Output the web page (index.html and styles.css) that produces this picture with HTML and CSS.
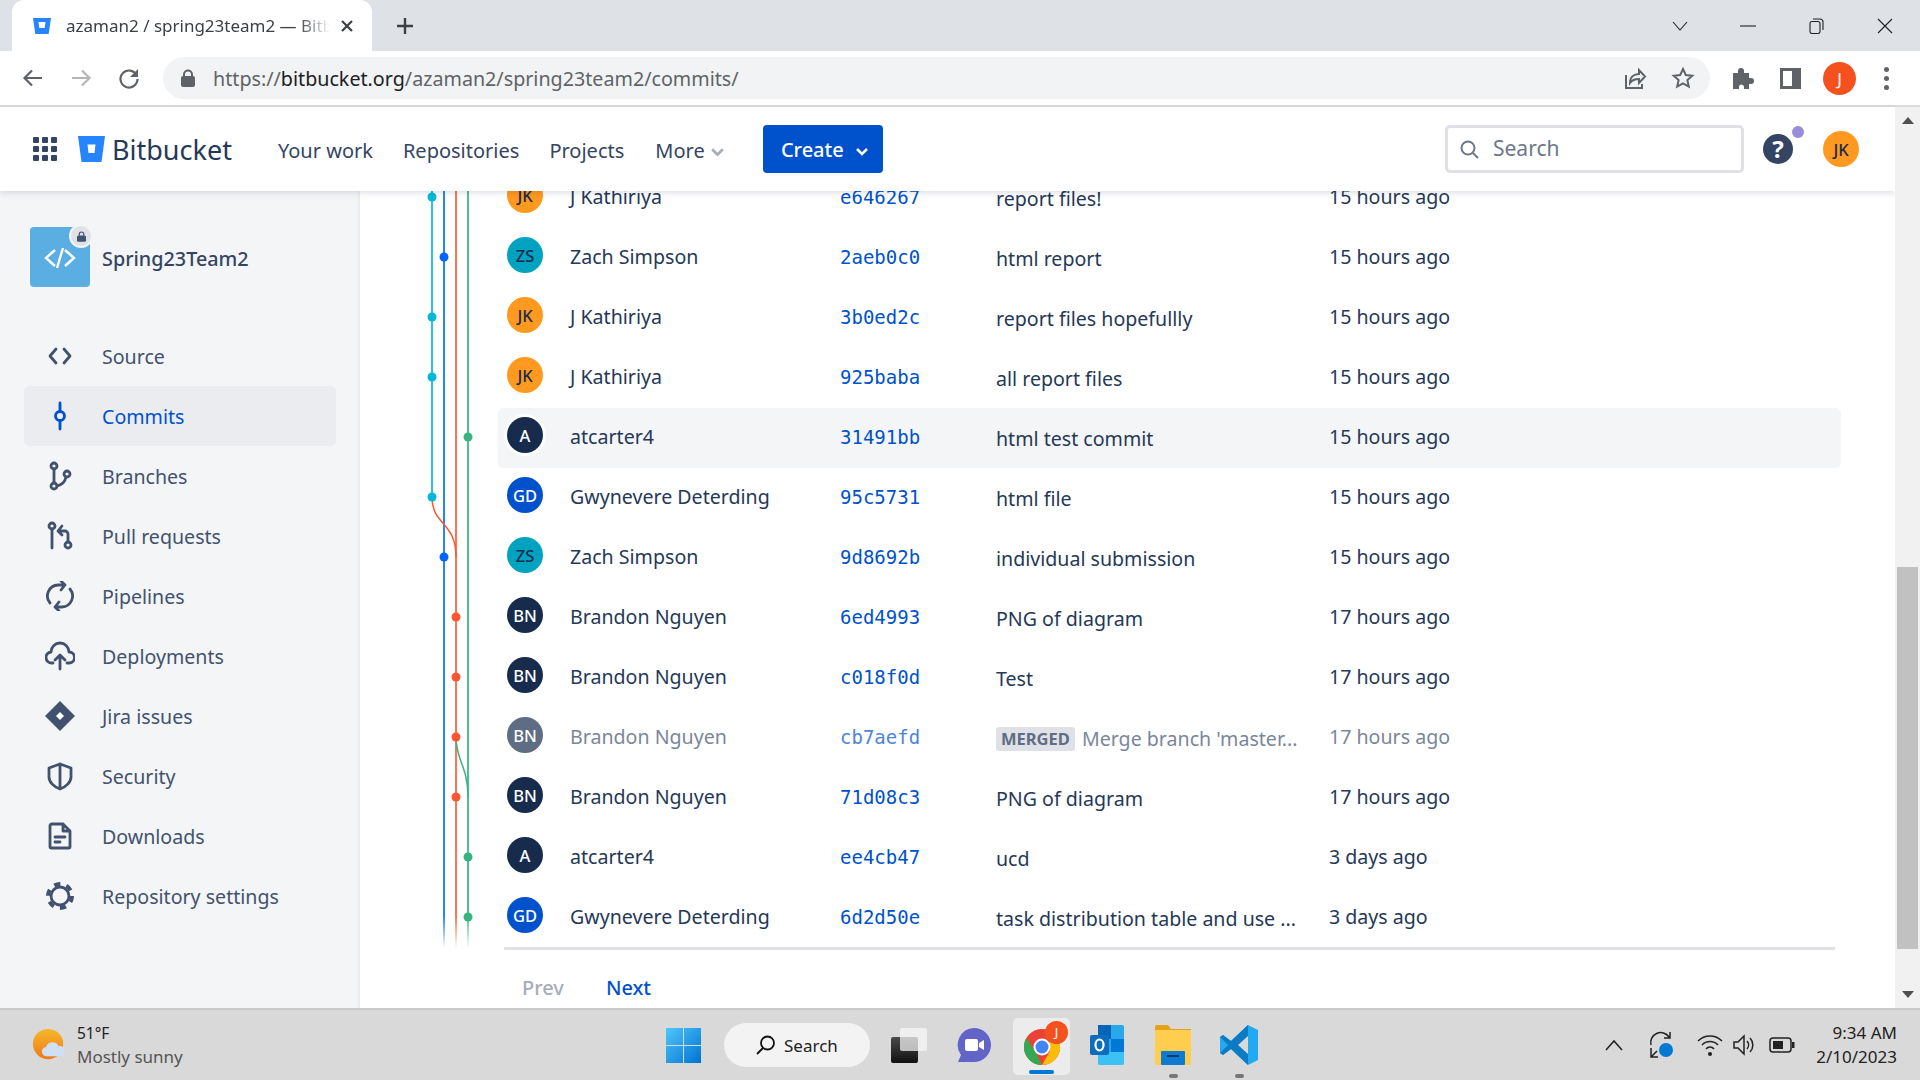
FILE: index.html
```html
<!DOCTYPE html>
<html lang="en">
<head>
    <meta charset="UTF-8">
    <title>azaman2 / spring23team2 — Bitbucket</title>
    <link rel="stylesheet" href="styles.css">
</head>
<body>
    <div class="tabstrip">
        <div class="tab">
            <svg class="favicon" viewBox="0 0 18 18"><path fill="#2684ff" d="M0 1h18l-2.300 16H2.300z"/><path fill="#fff" d="M5.500 5h7l-.8 6H6.300z"/></svg>
            <span class="tab-title">azaman2 / spring23team2 — Bitbucket</span>
            <svg class="tab-close" viewBox="0 0 14 14"><path d="M2 2l10 10M12 2L2 12"/></svg>
        </div>
        <svg class="new-tab" viewBox="0 0 18 18"><path d="M9 1v16M1 9h16"/></svg>
        <div class="win-controls">
            <svg viewBox="0 0 16 16"><path d="M1 4l7 8 7-8"/></svg>
            <svg viewBox="0 0 16 16"><path d="M0 8h16"/></svg>
            <svg viewBox="0 0 16 16"><rect x="1" y="3.500" width="10" height="12" rx="2"/><path d="M4 1h7a3 3 0 0 1 3 3v8"/></svg>
            <svg viewBox="0 0 16 16"><path d="M1 1l14 14M15 1L1 15"/></svg>
        </div>
    </div>

    <div class="toolbar">
        <svg class="tb-btn" viewBox="0 0 24 24"><path d="M21 12H4M11 4.500L3.500 12l7.500 7.500"/></svg>
        <svg class="tb-btn tb-off" viewBox="0 0 24 24"><path d="M3 12h17M13 4.500l7.500 7.500-7.500 7.500"/></svg>
        <svg class="tb-btn" viewBox="0 0 24 24"><path d="M19.500 9A8.500 8.500 0 1 0 20.500 13"/><path class="fill" d="M21 3v8h-8z"/></svg>
        <div class="omnibox">
            <svg class="lock" viewBox="0 0 14 18"><path d="M3 8V5.500a4 4 0 0 1 8 0V8" fill="none" stroke="#5f6368" stroke-width="2"/><rect y="7" width="14" height="11" rx="2" fill="#5f6368"/></svg>
            <span class="url">https://<b>bitbucket.org</b>/azaman2/spring23team2/commits/</span>
            <svg class="omni-icon" viewBox="0 0 24 24"><path d="M3 9v13h16v-4M7 17c0-6 4-9 9-9V4l6 6.500-6 6.500v-4c-4 0-7 1-9 4z"/></svg>
            <svg class="omni-icon" viewBox="0 0 24 24"><path d="M12 3l2.800 6 6.500.7-4.900 4.400 1.400 6.500L12 17.300l-5.800 3.300 1.400-6.500-4.900-4.400 6.500-.7z"/></svg>
        </div>
        <svg class="puzzle" viewBox="0 0 24 24"><path d="M3 7h5V5a3 3 0 0 1 6 0v2h5v5h2a3 3 0 0 1 0 6h-2v5h-5v-2a2.500 2.500 0 0 0-5 0v2H3z"/></svg>
        <div class="side-panel"></div>
        <div class="profile">J</div>
        <div class="kebab"><i></i><i></i><i></i></div>
    </div>

    <div class="app">
        <div class="page">
            <header class="topbar">
                <div class="apps"><i></i><i></i><i></i><i></i><i></i><i></i><i></i><i></i><i></i></div>
                <svg class="logo" viewBox="0 0 27 26"><path fill="#2684ff" d="M0 0h27l-3.500 26H3.500z"/><path fill="#fff" d="M9.500 8.500h8l-1 8.500h-6z"/></svg>
                <span class="brand">Bitbucket</span>
                <nav class="topnav">
                    <a>Your work</a>
                    <a>Repositories</a>
                    <a>Projects</a>
                    <a>More <svg class="more-caret" viewBox="0 0 14 10"><path d="M2 2l5 5 5-5"/></svg></a>
                </nav>
                <button class="create">Create <svg viewBox="0 0 14 10"><path d="M2 2l5 5 5-5"/></svg></button>
                <div class="search">
                    <svg viewBox="0 0 20 20"><circle cx="9" cy="9" r="6.500"/><path d="M14 14l5 5"/></svg>
                    <span>Search</span>
                </div>
                <div class="help">?<i></i></div>
                <div class="avatar jk top-avatar">JK</div>
            </header>

            <div class="content">
                <aside class="sidebar">
                    <div class="repo">
                        <div class="repo-icon">
                            <svg viewBox="0 0 60 60"><path d="M25 23l-9 8 9 8M35 23l9 8-9 8M33 21l-6 20"/></svg>
                            <div class="repo-lock"><svg viewBox="0 0 12 14"><path d="M3 6V4a3 3 0 0 1 6 0v2" fill="none" stroke="#42526e" stroke-width="1.600"/><rect y="5.500" width="12" height="8.500" rx="2" fill="#42526e"/></svg></div>
                        </div>
                        <span class="repo-name">Spring23Team2</span>
                    </div>
                    <ul class="side-nav">
                        <li><svg viewBox="0 0 30 30"><path d="M11 8l-6 7 6 7M19 8l6 7-6 7"/></svg>Source</li>
                        <li class="active"><svg viewBox="0 0 30 30"><circle cx="15" cy="15" r="4.500"/><path d="M15 2v8M15 20v8"/></svg>Commits</li>
                        <li><svg viewBox="0 0 30 30"><circle cx="9" cy="5" r="3"/><circle cx="9" cy="25" r="3"/><circle cx="22" cy="13" r="3"/><path d="M9 8v14M21 16c-1 5-5 8-9 9"/></svg>Branches</li>
                        <li><svg viewBox="0 0 30 30"><circle cx="7" cy="5" r="3"/><path d="M7 8v19"/><circle cx="23" cy="24" r="3"/><path d="M23 21v-8a3 3 0 0 0-3-3h-6M17 5l-4 5 4 4"/></svg>Pull requests</li>
                        <li><svg viewBox="0 0 30 30"><path d="M5 22A11 11 0 0 1 13 4h7M16 0l4 4-4 5M25 8a11 11 0 0 1-8 18h-7M14 30l-4-4 4-5"/></svg>Pipelines</li>
                        <li><svg viewBox="0 0 30 30"><path d="M8 22H7a5.500 5.500 0 0 1-1-11 9 9 0 0 1 18 0 5.500 5.500 0 0 1 0 11h-2M15 28V15M10 19l5-5 5 5"/></svg>Deployments</li>
                        <li><svg class="solid" viewBox="0 0 30 30"><path d="M15 0l15 15-15 15L0 15z"/><path fill="#fff" d="M15 11l4 4-4 4-4-4z"/></svg>Jira issues</li>
                        <li><svg viewBox="0 0 30 30"><path d="M15 3l11 4v9c0 5-5 10-11 12C9 26 4 21 4 16V7zM15 3v25"/></svg>Security</li>
                        <li><svg viewBox="0 0 30 30"><path d="M18 3H7a2 2 0 0 0-2 2v21a1 1 0 0 0 1 1h18a1 1 0 0 0 1-1V10zM18 3v7h7M10 16h10M10 21h5"/></svg>Downloads</li>
                        <li><svg viewBox="0 0 30 30"><circle cx="15" cy="15" r="9"/><circle class="teeth" cx="15" cy="15" r="12"/></svg>Repository settings</li>
                    </ul>
                </aside>

                <main class="main">
                    <svg class="graph" viewBox="0 0 140 760">
                        <defs>
                            <linearGradient id="fadeBlue" gradientUnits="userSpaceOnUse" x1="0" y1="725" x2="0" y2="757"><stop offset="0" stop-color="#2684ff"/><stop offset="1" stop-color="#2684ff" stop-opacity="0"/></linearGradient>
                            <linearGradient id="fadeRed" gradientUnits="userSpaceOnUse" x1="0" y1="725" x2="0" y2="757"><stop offset="0" stop-color="#ff7452"/><stop offset="1" stop-color="#ff7452" stop-opacity="0"/></linearGradient>
                            <linearGradient id="fadeGreen" gradientUnits="userSpaceOnUse" x1="0" y1="725" x2="0" y2="757"><stop offset="0" stop-color="#4fc08f"/><stop offset="1" stop-color="#4fc08f" stop-opacity="0"/></linearGradient>
                        </defs>
                        <path class="edge" stroke="#2cc2e0" d="M72 0V306"/>
                        <path class="edge" stroke="url(#fadeBlue)" d="M84 0V757"/>
                        <path class="edge" stroke="url(#fadeRed)" d="M96 0V757"/>
                        <path class="edge" stroke="url(#fadeGreen)" d="M108 0V757"/>
                        <path class="merge" stroke="#ff5630" d="M72 306C72 335 96 330 96 366"/>
                        <path class="merge" stroke="#36b37e" d="M96 546C96 570 108 575 108 606"/>
                        <g fill="#00b8d9"><circle cx="72" cy="6" r="4.500"/><circle cx="72" cy="126" r="4.500"/><circle cx="72" cy="186" r="4.500"/><circle cx="72" cy="306" r="4.500"/></g>
                        <g fill="#0065ff"><circle cx="84" cy="66" r="4.500"/><circle cx="84" cy="366" r="4.500"/></g>
                        <g fill="#ff5630"><circle cx="96" cy="426" r="4.500"/><circle cx="96" cy="486" r="4.500"/><circle cx="96" cy="546" r="4.500"/><circle cx="96" cy="606" r="4.500"/></g>
                        <g fill="#36b37e"><circle cx="108" cy="246" r="4.500"/><circle cx="108" cy="666" r="4.500"/><circle cx="108" cy="726" r="4.500"/></g>
                    </svg>

                    <div class="commits">
                        <div class="commit"><div class="avatar jk">JK</div><span class="author">J Kathiriya</span><a class="hash">e646267</a><span class="msg">report files!</span><span class="date">15 hours ago</span></div>
                        <div class="commit"><div class="avatar zs">ZS</div><span class="author">Zach Simpson</span><a class="hash">2aeb0c0</a><span class="msg">html report</span><span class="date">15 hours ago</span></div>
                        <div class="commit"><div class="avatar jk">JK</div><span class="author">J Kathiriya</span><a class="hash">3b0ed2c</a><span class="msg">report files hopefullly</span><span class="date">15 hours ago</span></div>
                        <div class="commit"><div class="avatar jk">JK</div><span class="author">J Kathiriya</span><a class="hash">925baba</a><span class="msg">all report files</span><span class="date">15 hours ago</span></div>
                        <div class="commit hover"><div class="avatar navy">A</div><span class="author">atcarter4</span><a class="hash">31491bb</a><span class="msg">html test commit</span><span class="date">15 hours ago</span></div>
                        <div class="commit"><div class="avatar blue">GD</div><span class="author">Gwynevere Deterding</span><a class="hash">95c5731</a><span class="msg">html file</span><span class="date">15 hours ago</span></div>
                        <div class="commit"><div class="avatar zs">ZS</div><span class="author">Zach Simpson</span><a class="hash">9d8692b</a><span class="msg">individual submission</span><span class="date">15 hours ago</span></div>
                        <div class="commit"><div class="avatar navy">BN</div><span class="author">Brandon Nguyen</span><a class="hash">6ed4993</a><span class="msg">PNG of diagram</span><span class="date">17 hours ago</span></div>
                        <div class="commit"><div class="avatar navy">BN</div><span class="author">Brandon Nguyen</span><a class="hash">c018f0d</a><span class="msg">Test</span><span class="date">17 hours ago</span></div>
                        <div class="commit merged"><div class="avatar slate">BN</div><span class="author">Brandon Nguyen</span><a class="hash">cb7aefd</a><span class="msg"><em class="badge">MERGED</em>Merge branch 'master...</span><span class="date">17 hours ago</span></div>
                        <div class="commit"><div class="avatar navy">BN</div><span class="author">Brandon Nguyen</span><a class="hash">71d08c3</a><span class="msg">PNG of diagram</span><span class="date">17 hours ago</span></div>
                        <div class="commit"><div class="avatar navy">A</div><span class="author">atcarter4</span><a class="hash">ee4cb47</a><span class="msg">ucd</span><span class="date">3 days ago</span></div>
                        <div class="commit"><div class="avatar blue">GD</div><span class="author">Gwynevere Deterding</span><a class="hash">6d2d50e</a><span class="msg">task distribution table and use ...</span><span class="date">3 days ago</span></div>
                    </div>
                    <div class="pager"><span class="prev">Prev</span><a class="next">Next</a></div>
                </main>
            </div>
        </div>

        <div class="scrollbar">
            <i class="arrow-up"></i>
            <div class="thumb"></div>
            <i class="arrow-down"></i>
        </div>
    </div>

    <footer class="taskbar">
        <div class="weather">
            <svg viewBox="0 0 36 36"><defs><linearGradient id="sun" x1="0" y1="0" x2="0" y2="1"><stop offset="0" stop-color="#f5b82a"/><stop offset="1" stop-color="#f07a1a"/></linearGradient></defs><circle cx="17" cy="17" r="16" fill="url(#sun)"/><path fill="#cfe0f5" d="M16 30a5 5 0 0 1-1-10 7 7 0 0 1 13-1 5.500 5.500 0 0 1 2 11z"/></svg>
            <div class="weather-text"><span class="temp">51°F</span><span class="cond">Mostly sunny</span></div>
        </div>
        <div class="dock">
            <svg class="start" viewBox="0 0 35 35"><defs><linearGradient id="win" x1="0" y1="0" x2="1" y2="1"><stop offset="0" stop-color="#4fc6fb"/><stop offset="1" stop-color="#0073d1"/></linearGradient></defs><path fill="url(#win)" d="M0 0h17v17H0zM18 0h17v17H18zM0 18h17v17H0zM18 18h17v17H18z"/></svg>
            <div class="task-search">
                <svg viewBox="0 0 20 20"><circle cx="11.500" cy="8" r="6.500"/><path d="M7 13l-6 6"/></svg>
                <span>Search</span>
            </div>
            <svg class="task-view" viewBox="0 0 36 35"><defs><linearGradient id="tv" x1="0" y1="0" x2="0" y2="1"><stop offset="0" stop-color="#4a4a4a"/><stop offset="1" stop-color="#111"/></linearGradient></defs><rect y="9" width="27" height="26" rx="2" fill="url(#tv)"/><rect x="9" width="27" height="23" rx="2" fill="#f7f7f7" opacity=".72"/></svg>
            <svg class="teams" viewBox="0 0 34 35"><path fill="#6264c8" d="M17 0a17 17 0 0 1 0 34H1l3-7A17 17 0 0 1 17 0z"/><rect x="8" y="11" width="13" height="12" rx="2" fill="#fff"/><path fill="#fff" d="M22 15l5-3v10l-5-3z"/></svg>
            <div class="chrome-tile">
                <svg viewBox="0 0 36 36"><circle cx="18" cy="18" r="18" fill="#ea4335"/><path fill="#34a853" d="M2.400 9L11 22l7 14A18 18 0 0 1 2.400 9z"/><path fill="#fbbc05" d="M33.600 9A18 18 0 0 1 18 36l8-14-1-13z"/><circle cx="18" cy="18" r="8.500" fill="#fff"/><circle cx="18" cy="18" r="6.500" fill="#4285f4"/></svg>
                <div class="chrome-badge">J</div>
                <div class="running"></div>
            </div>
            <svg class="outlook" viewBox="0 0 34 40"><rect x="8" width="26" height="40" rx="2" fill="#28a8ea"/><rect x="8" width="13" height="14" fill="#0364b8"/><rect x="21" y="14" width="13" height="13" fill="#0078d4"/><rect x="8" y="27" width="26" height="13" fill="#50d9ff" opacity=".5"/><rect y="10" width="19" height="20" rx="2" fill="#0f6cbd"/><ellipse cx="9.500" cy="20" rx="4" ry="5.500" fill="none" stroke="#fff" stroke-width="2.200"/></svg>
            <div class="app-with-dot">
                <svg class="files" viewBox="0 0 36 40"><path fill="#e3a21a" d="M0 2a2 2 0 0 1 2-2h11l3 4h20v6H0z"/><rect y="5" width="36" height="35" rx="1" fill="#ffce4f"/><rect x="6" y="26" width="24" height="14" rx="1" fill="#0f7bd0"/><rect x="12" y="30" width="12" height="2" fill="#073a68"/></svg>
                <i class="app-dot"></i>
            </div>
            <div class="app-with-dot code-app">
                <svg class="vscode" viewBox="0 0 38 40"><path fill="#23a9f1" d="M28 0l10 5v30l-10 5-17-16L3 30l-3-2V12l3-2 8 6z"/><path fill="#0b7cc4" d="M28 0v40L11 24l-8 6-3-2 8-8-8-8 3-2 8 6z"/><path fill="#d9d9d9" d="M28 11v18l-10-9z"/></svg>
                <i class="app-dot"></i>
            </div>
        </div>
        <div class="tray">
            <svg class="tray-chev" viewBox="0 0 18 12"><path d="M1 11l8-9 8 9"/></svg>
            <svg class="tray-sync" viewBox="0 0 26 28"><path d="M3 14A10 10 0 0 1 21 6M22 1v6h-6M3 17v9h7M3 26l6-6"/><circle class="sync-dot" cx="18" cy="19" r="7"/></svg>
            <svg class="tray-wifi" viewBox="0 0 26 24"><path d="M1 8a17 17 0 0 1 24 0M5 12a11 11 0 0 1 16 0M9 16a5 5 0 0 1 8 0"/><circle class="wifi-dot" cx="13" cy="21" r="2"/></svg>
            <svg class="tray-sound" viewBox="0 0 24 24"><path d="M2 9h4l6-6v18l-6-6H2zM15 8a6 6 0 0 1 0 8M18 5a10 10 0 0 1 0 14"/></svg>
            <svg class="tray-batt" viewBox="0 0 26 16"><rect x="1" y="1" width="21" height="14" rx="3"/><rect class="batt-fill" x="4" y="4" width="10" height="8"/><rect class="batt-fill" x="23" y="5" width="2.500" height="6"/></svg>
            <div class="clock"><span>9:34 AM</span><span>2/10/2023</span></div>
        </div>
    </footer>
</body>
</html>
```

FILE: styles.css
```css
* {
    box-sizing: border-box;
}

html, body {
    margin: 0;
    height: 1080px;
    overflow: hidden;
}

body {
    display: flex;
    flex-direction: column;
    font-family: "Noto Sans", "Open Sans", sans-serif;
    color: #172b4d;
    background-color: white;
}

/* browser chrome */
.tabstrip {
    height: 51px;
    flex: none;
    display: flex;
    align-items: center;
    background-color: #dee1e6;
}

.tab {
    width: 360px;
    height: 51px;
    margin-left: 12px;
    padding-left: 21px;
    display: flex;
    align-items: center;
    background-color: white;
    border-radius: 12px 12px 0 0;
}

.favicon {
    width: 18px;
    height: 18px;
    flex: none;
}

.tab-title {
    width: 264px;
    margin-left: 15px;
    font-size: 17px;
    color: #3c4043;
    white-space: nowrap;
    overflow: hidden;
    -webkit-mask-image: linear-gradient(to right, black 88%, transparent);
    mask-image: linear-gradient(to right, black 88%, transparent);
}

.tab-close {
    width: 14px;
    height: 14px;
    margin-left: 10px;
    fill: none;
    stroke: #3c4043;
    stroke-width: 2.200;
}

.new-tab {
    width: 18px;
    height: 18px;
    margin-left: 24px;
    fill: none;
    stroke: #3c4043;
    stroke-width: 2.400;
}

.win-controls {
    margin-left: auto;
    width: 248px;
    padding-right: 27px;
    display: flex;
    justify-content: space-between;
    fill: none;
    stroke: #222;
    stroke-width: 1.100;
}

.win-controls svg {
    width: 16px;
    height: 16px;
}

.toolbar {
    height: 56px;
    flex: none;
    display: flex;
    align-items: center;
    padding-left: 21px;
    border-bottom: 2px solid #dcdcdc;
}

.tb-btn {
    width: 24px;
    height: 24px;
    margin-right: 24px;
    fill: none;
    stroke: #5f6368;
    stroke-width: 2.200;
}

.tb-btn .fill {
    fill: #5f6368;
    stroke: none;
}

.tb-off {
    stroke: #b4b6b9;
}

.omnibox {
    width: 1547px;
    height: 42px;
    margin-left: -2px;
    padding: 0 15px 0 18px;
    display: flex;
    align-items: center;
    background-color: #f1f3f4;
    border-radius: 21px;
}

.lock {
    width: 14px;
    height: 18px;
    flex: none;
}

.url {
    margin-left: 18px;
    font-size: 19.700px;
    color: #5f6368;
}

.url b {
    font-weight: 400;
    color: #202124;
}

.omni-icon {
    width: 24px;
    height: 24px;
    fill: none;
    stroke: #5f6368;
    stroke-width: 2;
    margin-left: 24px;
}

.url + .omni-icon {
    margin-left: auto;
}

.puzzle {
    width: 24px;
    height: 24px;
    margin-left: 20px;
    fill: #5f6368;
}

.side-panel {
    width: 21px;
    height: 21px;
    margin-left: 26px;
    border: 3px solid #5f6368;
    border-right-width: 9px;
}

.profile {
    width: 33px;
    height: 33px;
    margin-left: 22px;
    border-radius: 50%;
    background-color: #f4511e;
    color: white;
    font-size: 17px;
    display: flex;
    align-items: center;
    justify-content: center;
}

.kebab {
    margin-left: 28px;
    display: flex;
    flex-direction: column;
    gap: 4px;
}

.kebab i {
    width: 5px;
    height: 5px;
    border-radius: 50%;
    background-color: #5f6368;
}

/* bitbucket page */
.app {
    flex: 1;
    min-height: 0;
    display: flex;
}

.page {
    flex: 1;
    min-width: 0;
    display: flex;
    flex-direction: column;
}

.topbar {
    height: 84px;
    flex: none;
    display: flex;
    align-items: center;
    padding-left: 33px;
    position: relative;
    z-index: 2;
    background-color: white;
    box-shadow: 0 2px 6px rgba(9, 30, 66, 0.14);
}

.apps {
    width: 24px;
    height: 24px;
    display: grid;
    grid-template-columns: repeat(3, 6px);
    gap: 3px;
}

.apps i {
    background-color: #344563;
    border-radius: 1px;
}

.logo {
    width: 27px;
    height: 26px;
    margin-left: 21px;
}

.brand {
    margin-left: 7px;
    font-size: 27px;
    color: #253858;
}

.topnav {
    display: flex;
    margin-left: 46px;
    margin-top: 2px;
    gap: 30px;
}

.topnav a {
    font-size: 20px;
    color: #344563;
    white-space: nowrap;
}

.topnav a:last-child {
    margin-left: 1px;
}

.more-caret {
    width: 15px;
    height: 11px;
    fill: none;
    stroke: #a5adba;
    stroke-width: 2.500;
}

.create {
    width: 120px;
    height: 48px;
    margin-left: 38px;
    padding-left: 10px;
    border: none;
    border-radius: 4px;
    background-color: #0052cc;
    color: white;
    font-family: inherit;
    font-size: 20px;
    font-weight: 500;
}

.create svg {
    width: 14px;
    height: 10px;
    margin-left: 6px;
    fill: none;
    stroke: white;
    stroke-width: 2.500;
}

.search {
    width: 299px;
    height: 48px;
    margin-left: auto;
    padding-left: 11px;
    display: flex;
    align-items: center;
    border: 3px solid #dfe1e6;
    border-radius: 5px;
    color: #6b778c;
    font-size: 21px;
}

.search svg {
    width: 20px;
    height: 20px;
    margin-right: 14px;
    fill: none;
    stroke: #6b778c;
    stroke-width: 2;
}

.search span {
    margin-top: -2px;
}

.help {
    width: 30px;
    height: 30px;
    margin-left: 19px;
    position: relative;
    border-radius: 50%;
    background-color: #344563;
    color: white;
    font-size: 24px;
    font-weight: 700;
    line-height: 30px;
    text-align: center;
}

.help i {
    position: absolute;
    top: -8px;
    right: -11px;
    width: 12px;
    height: 12px;
    border-radius: 50%;
    background-color: #998dd9;
}

.top-avatar {
    margin-left: 30px;
    margin-right: 36px;
}

.content {
    flex: 1;
    min-height: 0;
    display: flex;
}

.sidebar {
    width: 360px;
    flex: none;
    padding: 36px 22px 0 0;
    background-color: #f4f5f7;
    border-right: 2px solid #ebecf0;
}

.repo {
    display: flex;
    align-items: center;
    padding-left: 30px;
}

.repo-icon {
    width: 60px;
    height: 60px;
    position: relative;
    border-radius: 4px;
    background-color: #5aaee2;
}

.repo-icon > svg {
    fill: none;
    stroke: white;
    stroke-width: 2.400;
}

.repo-lock {
    position: absolute;
    top: -1px;
    right: -1px;
    width: 20px;
    height: 20px;
    display: flex;
    align-items: center;
    justify-content: center;
    border-radius: 50%;
    background-color: #dfe1e6;
    box-shadow: 0 0 0 2px #f4f5f7;
}

.repo-lock svg {
    width: 9px;
    height: 11px;
}

.repo-name {
    margin-left: 12px;
    margin-top: 2px;
    font-size: 19.800px;
    font-weight: 500;
    color: #344563;
}

.side-nav {
    list-style: none;
    margin: 39px 0 0;
    padding: 0 0 0 24px;
}

.side-nav li {
    height: 60px;
    padding-left: 21px;
    display: flex;
    align-items: center;
    gap: 27px;
    font-size: 19.600px;
    color: #42526e;
    border-radius: 5px;
}

.side-nav svg {
    width: 30px;
    height: 30px;
    flex: none;
    fill: none;
    stroke: #42526e;
    stroke-width: 2.800;
    stroke-linecap: round;
    stroke-linejoin: round;
}

.side-nav .solid {
    fill: #42526e;
    stroke: none;
}

.side-nav .teeth {
    stroke-width: 4;
    stroke-linecap: butt;
    stroke-dasharray: 6.280 6.280;
}

.side-nav .active {
    background-color: #ebecf0;
    color: #0052cc;
}

.side-nav .active svg {
    stroke: #0052cc;
}

.main {
    flex: 1;
    min-width: 0;
    position: relative;
    overflow: hidden;
    padding-left: 138px;
}

.graph {
    position: absolute;
    left: 0;
    top: 0;
    width: 140px;
    height: 760px;
}

.edge {
    fill: none;
    stroke-width: 2;
}

.merge {
    fill: none;
    stroke-width: 1.500;
}

.commits {
    width: 1343px;
    margin-top: -23px;
    margin-bottom: -1px;
}

.commit {
    height: 60px;
    padding: 0 0 4px 9px;
    display: grid;
    grid-template-columns: 63px 271px 155px 333px 1fr;
    align-items: center;
    font-size: 19.600px;
    border-radius: 5px;
    white-space: nowrap;
}

.hover {
    background-color: #f4f5f7;
}

.hover .avatar {
    box-shadow: 0 0 0 3px white;
}

.avatar {
    width: 36px;
    height: 36px;
    flex: none;
    display: flex;
    align-items: center;
    justify-content: center;
    border-radius: 50%;
    font-size: 16.500px;
    font-weight: 500;
    transform: translateY(-1px);
}

.top-avatar {
    transform: none;
}

.jk {
    background-color: #ff991f;
    color: #172b4d;
}

.zs {
    background-color: #00a3bf;
    color: #172b4d;
}

.navy {
    background-color: #172b4d;
    color: white;
}

.blue {
    background-color: #0052cc;
    color: white;
}

.slate {
    background-color: #5e6c84;
    color: white;
}

.author {
    color: #253858;
}

.hash {
    font-family: "DejaVu Sans Mono", monospace;
    font-size: 19px;
    color: #0052cc;
    transform: translate(-1px, 1px);
}

.msg {
    color: #253858;
    transform: translateY(2px);
}

.date {
    color: #253858;
}

.merged .author,
.merged .msg,
.merged .date {
    color: #7a869a;
}

.merged .hash {
    color: #4c84d8;
}

.badge {
    display: inline-block;
    height: 24px;
    margin-right: 7px;
    padding: 0 5px;
    font-size: 16.500px;
    font-style: normal;
    font-weight: 700;
    line-height: 24px;
    color: #5e6c84;
    background-color: #dfe1e6;
    border-radius: 3px;
    vertical-align: 1px;
}

.pager {
    width: 1331px;
    margin-left: 6px;
    padding: 24px 0 0 18px;
    display: flex;
    gap: 42px;
    border-top: 3px solid #dfe1e6;
    font-size: 20px;
    font-weight: 500;
}

.prev {
    color: #a5adba;
}

.next {
    color: #0052cc;
}

.scrollbar {
    width: 25px;
    flex: none;
    position: relative;
    z-index: 3;
    background-color: #f1f1f1;
}

.arrow-up,
.arrow-down {
    position: absolute;
    left: 7px;
    border-left: 6px solid transparent;
    border-right: 6px solid transparent;
}

.arrow-up {
    top: 10px;
    border-bottom: 7px solid #505050;
}

.arrow-down {
    bottom: 10px;
    border-top: 7px solid #505050;
}

.thumb {
    position: absolute;
    left: 2px;
    right: 2px;
    top: 460px;
    height: 382px;
    background-color: #c1c1c1;
}

/* windows taskbar */
.taskbar {
    height: 72px;
    flex: none;
    position: relative;
    display: flex;
    align-items: center;
    padding-left: 32px;
    background-color: #d9d9d9;
    border-top: 2px solid #cacaca;
}

.weather {
    display: flex;
    align-items: center;
    gap: 11px;
}

.weather svg {
    width: 34px;
    height: 34px;
}

.weather-text {
    display: flex;
    flex-direction: column;
    line-height: 24px;
}

.temp {
    font-size: 15.500px;
    color: #222;
}

.cond {
    font-size: 17px;
    color: #555;
}

.dock {
    position: absolute;
    left: 666px;
    top: 0;
    bottom: 0;
    display: flex;
    align-items: center;
}

.start {
    width: 35px;
    height: 35px;
    flex: none;
}

.task-search {
    width: 146px;
    height: 44px;
    margin-left: 23px;
    padding-left: 32px;
    display: flex;
    align-items: center;
    gap: 8px;
    font-size: 17px;
    color: #222;
    background-color: #f3f3f3;
    border-radius: 22px;
}

.task-search svg {
    width: 20px;
    height: 20px;
    fill: none;
    stroke: #111;
    stroke-width: 1.800;
}

.task-view {
    width: 36px;
    height: 35px;
    margin-left: 21px;
    flex: none;
}

.teams {
    width: 34px;
    height: 35px;
    margin-left: 30px;
    flex: none;
}

.chrome-tile {
    width: 57px;
    height: 57px;
    margin-left: 22px;
    margin-top: 3px;
    position: relative;
    display: flex;
    align-items: center;
    justify-content: center;
    background-color: #ececec;
    border-radius: 5px;
}

.chrome-tile svg {
    width: 36px;
    height: 36px;
}

.chrome-badge {
    position: absolute;
    top: 3px;
    right: 2px;
    width: 23px;
    height: 23px;
    border-radius: 50%;
    background-color: #f4511e;
    color: white;
    font-size: 13px;
    line-height: 23px;
    text-align: center;
}

.running {
    position: absolute;
    left: 16px;
    bottom: 1px;
    width: 25px;
    height: 4px;
    border-radius: 2px;
    background-color: #0078d4;
}

.outlook {
    width: 34px;
    height: 40px;
    margin-left: 20px;
    flex: none;
}

.app-with-dot {
    position: relative;
    margin-left: 31px;
    display: flex;
}

.code-app {
    margin-left: 29px;
}

.files {
    width: 36px;
    height: 40px;
}

.vscode {
    width: 38px;
    height: 40px;
}

.app-dot {
    position: absolute;
    left: 50%;
    bottom: -13px;
    width: 9px;
    height: 4px;
    margin-left: -4px;
    border-radius: 2px;
    background-color: #777;
}

.tray {
    position: absolute;
    right: 23px;
    top: 0;
    bottom: 0;
    display: flex;
    align-items: center;
    fill: none;
    stroke: #222;
    stroke-width: 1.500;
}

.tray svg {
    flex: none;
}

.tray-chev {
    width: 18px;
    height: 12px;
    margin-right: 25px;
}

.tray-sync {
    width: 26px;
    height: 28px;
    margin-right: 23px;
}

.sync-dot {
    fill: #0078d4;
    stroke: none;
}

.tray-wifi {
    width: 26px;
    height: 24px;
    margin-right: 9px;
}

.wifi-dot {
    fill: #222;
    stroke: none;
}

.tray-sound {
    width: 24px;
    height: 24px;
    margin-right: 13px;
}

.tray-batt {
    width: 26px;
    height: 16px;
    margin-right: 21px;
}

.batt-fill {
    fill: #222;
    stroke: none;
}

.clock {
    display: flex;
    flex-direction: column;
    align-items: flex-end;
    line-height: 24px;
    font-size: 17px;
    color: #222;
}
```
